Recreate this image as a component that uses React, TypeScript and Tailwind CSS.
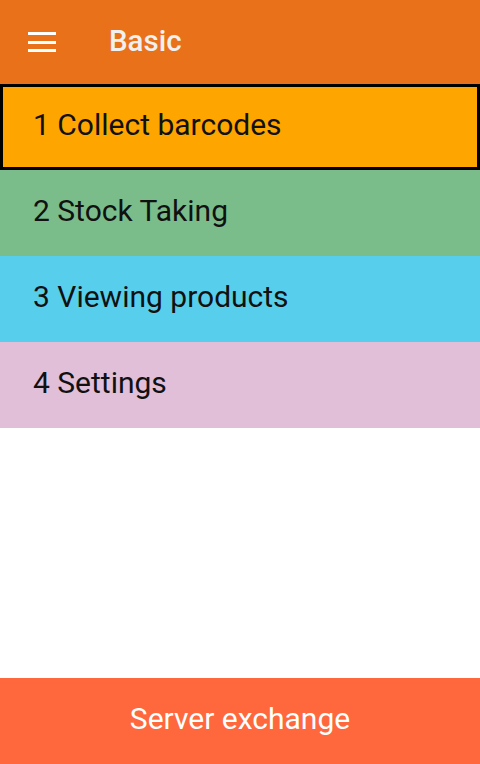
// Main menu — one coloured row per section, the first one is the focused item.
const ITEMS = [
  { label: '1 Collect barcodes', bg: 'bg-[#ffa500]', active: true },
  { label: '2 Stock Taking', bg: 'bg-[#7abd8a]', active: false },
  { label: '3 Viewing products', bg: 'bg-[#57cfec]', active: false },
  { label: '4 Settings', bg: 'bg-[#e1bfd9]', active: false },
]

export default function App() {
  return (
    <main className="flex flex-col h-[764px] w-[480px] bg-white font-['Roboto',sans-serif]">
      {/* ── Toolbar ── */}
      <header className="flex items-center h-[84px] shrink-0 bg-[#e9711a] pl-[28px]">
        <div className="flex flex-col gap-[5.5px] w-[28px]">
          <span className="block h-[3px] bg-white" />
          <span className="block h-[3px] bg-white" />
          <span className="block h-[3px] bg-white" />
        </div>
        <h1 className="ml-[53px] text-[29.5px] font-medium text-[#f0f0f0] leading-none">Basic</h1>
      </header>

      {/* ── Menu rows ── */}
      <nav className="flex flex-col">
        {ITEMS.map((it) => (
          <div
            key={it.label}
            className={`flex items-center h-[86px] pb-[4px] ${it.bg} ${it.active ? 'border-[3px] border-black pl-[30px]' : 'pl-[33px]'}`}
          >
            <span className="text-[30px] text-[#111] leading-none">{it.label}</span>
          </div>
        ))}
      </nav>

      <div className="flex-1" />

      {/* ── Bottom action ── */}
      <button className="h-[86px] shrink-0 pb-[5px] bg-[#ff673c] text-white text-[30px] leading-none">
        Server exchange
      </button>
    </main>
  )
}
